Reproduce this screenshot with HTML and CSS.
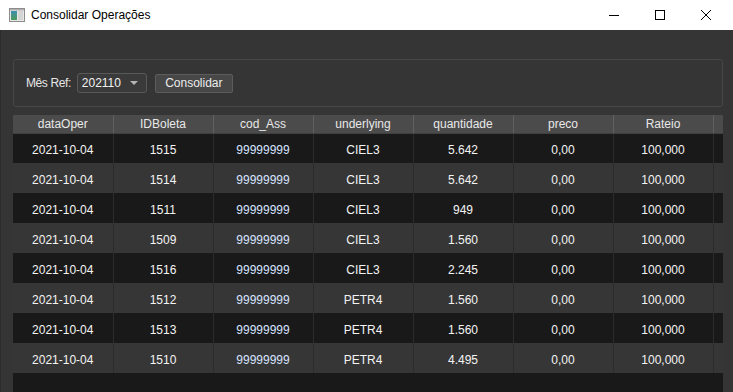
FILE: index.html
```html
<!DOCTYPE html>
<html lang="pt">
<head>
    <meta charset="UTF-8">
    <title>Consolidar Operações</title>
    <link rel="stylesheet" href="styles.css">
</head>
<body>
    <div class="window">
        <div class="titlebar">
            <svg class="app-icon" width="16" height="14" viewBox="0 0 16 14">
                <defs>
                    <linearGradient id="g" x1="0" y1="0" x2="0" y2="1">
                        <stop offset="0" stop-color="#3c8fb0"/>
                        <stop offset="1" stop-color="#4a9a5a"/>
                    </linearGradient>
                </defs>
                <rect x="0.5" y="0.5" width="15" height="13" fill="#e8e8e8" stroke="#8c8c8c"/>
                <rect x="2" y="3" width="6" height="9" fill="url(#g)"/>
                <rect x="9" y="3" width="5" height="9" fill="#d4d4d4"/>
                <rect x="1" y="1" width="14" height="1.5" fill="#b0b0b0"/>
            </svg>
            <span class="title">Consolidar Operações</span>
            <div class="controls">
                <svg width="46" height="30" viewBox="0 0 46 30"><line x1="18" y1="15.5" x2="28" y2="15.5" stroke="#000" stroke-width="1"/></svg>
                <svg width="46" height="30" viewBox="0 0 46 30"><rect x="18.5" y="10.5" width="9" height="9" fill="none" stroke="#000" stroke-width="1"/></svg>
                <svg width="46" height="30" viewBox="0 0 46 30"><path d="M18 10 L28 20 M28 10 L18 20" stroke="#000" stroke-width="1"/></svg>
            </div>
        </div>

        <div class="client">
            <div class="group">
                <label class="lbl">Mês Ref:</label>
                <div class="combo">
                    <span>202110</span>
                    <span class="arrow"></span>
                </div>
                <button class="btn">Consolidar</button>
            </div>

            <div class="view">
                <table class="grid">
                    <thead>
                        <tr>
                            <th>dataOper</th>
                            <th>IDBoleta</th>
                            <th>cod_Ass</th>
                            <th>underlying</th>
                            <th>quantidade</th>
                            <th>preco</th>
                            <th>Rateio</th>
                            <th class="stub"></th>
                        </tr>
                    </thead>
                    <tbody id="rows"></tbody>
                </table>
            </div>
        </div>
    </div>

    <script>
        // Linhas da grade
        const data = [
            ['2021-10-04', '1515', '99999999', 'CIEL3', '5.642', '0,00', '100,000'],
            ['2021-10-04', '1514', '99999999', 'CIEL3', '5.642', '0,00', '100,000'],
            ['2021-10-04', '1511', '99999999', 'CIEL3', '949', '0,00', '100,000'],
            ['2021-10-04', '1509', '99999999', 'CIEL3', '1.560', '0,00', '100,000'],
            ['2021-10-04', '1516', '99999999', 'CIEL3', '2.245', '0,00', '100,000'],
            ['2021-10-04', '1512', '99999999', 'PETR4', '1.560', '0,00', '100,000'],
            ['2021-10-04', '1513', '99999999', 'PETR4', '1.560', '0,00', '100,000'],
            ['2021-10-04', '1510', '99999999', 'PETR4', '4.495', '0,00', '100,000']
        ];

        const tbody = document.getElementById('rows');
        data.forEach(function(row) {
            const tr = document.createElement('tr');
            row.forEach(function(value, i) {
                const td = document.createElement('td');
                td.textContent = value;
                if (i === 2) td.className = 'code';
                tr.appendChild(td);
            });
            const stub = document.createElement('td');
            stub.className = 'stub';
            tr.appendChild(stub);
            tbody.appendChild(tr);
        });
    </script>
</body>
</html>
```

FILE: styles.css
```css
* {
    margin: 0;
    padding: 0;
    box-sizing: border-box;
}

body {
    font-family: "Liberation Sans", Arial, sans-serif;
    font-size: 12px;
    background-color: #353535;
    overflow: hidden;
}

.window {
    width: 733px;
    height: 392px;
    display: flex;
    flex-direction: column;
}

/* Title bar */
.titlebar {
    height: 30px;
    background: #ffffff;
    display: flex;
    align-items: center;
    padding-left: 9px;
    flex-shrink: 0;
}

.app-icon {
    margin-right: 6px;
}

.title {
    color: #000;
    flex: 1;
}

.controls {
    display: flex;
    margin-right: 4px;
}

.controls svg {
    display: block;
}

/* Client area */
.client {
    flex: 1;
    background: #353535;
    border-left: 1px solid #2c2c2c;
    padding: 29px 10px 0 12px;
    display: flex;
    flex-direction: column;
    gap: 8px;
    min-height: 0;
}

.group {
    height: 48px;
    border: 1px solid #474747;
    border-radius: 3px;
    display: flex;
    align-items: center;
    padding-left: 12px;
    flex-shrink: 0;
}

.lbl {
    color: #e6e6e6;
    letter-spacing: -0.4px;
    margin-right: 6px;
}

.combo {
    width: 70px;
    height: 20px;
    background: #3a3a3a;
    border: 1px solid #595959;
    border-radius: 3px;
    color: #f2f2f2;
    display: flex;
    align-items: center;
    justify-content: space-between;
    padding: 0 8px 0 4px;
    margin-right: 8px;
}

.arrow {
    width: 0;
    height: 0;
    border-left: 4px solid transparent;
    border-right: 4px solid transparent;
    border-top: 4px solid #b4b4b4;
}

.btn {
    width: 78px;
    height: 19px;
    background: #474747;
    border: 1px solid #5c5c5c;
    border-radius: 2px;
    color: #ececec;
    font-family: inherit;
    font-size: 12px;
}

/* Table view */
.view {
    flex: 1;
    width: 710px;
    background: #191919;
    overflow: hidden;
}

.grid {
    border-collapse: collapse;
    table-layout: fixed;
    width: 710px;
}

.grid th {
    width: 100px;
    height: 18px;
    background: #4b4b4b;
    color: #e8e8e8;
    font-weight: normal;
    border-right: 1px solid #606060;
    border-bottom: 1px solid #404040;
    text-align: center;
}

.grid th.stub,
.grid td.stub {
    width: 10px;
}

.grid td {
    height: 30px;
    padding-top: 3px;
    color: #f4f4f4;
    text-align: center;
    border-right: 1px solid #2c2c2c;
}

.grid td.code {
    color: #d6e4ff;
}

.grid tbody tr:nth-child(odd) {
    background: #191919;
}

.grid tbody tr:nth-child(even) {
    background: #363636;
}
```
